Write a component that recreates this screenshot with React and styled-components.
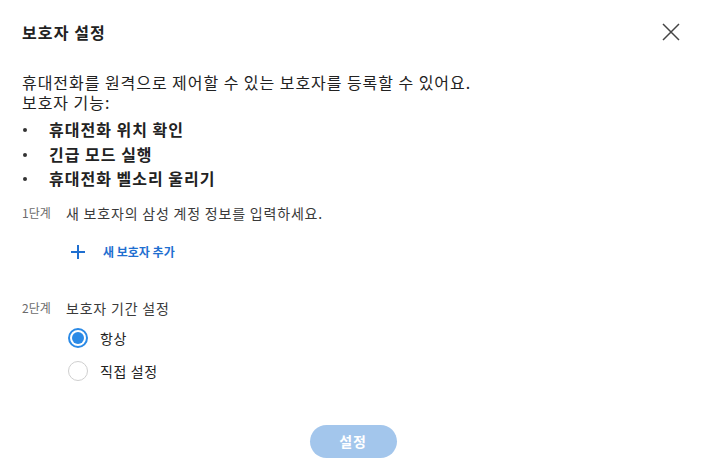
import React from "react";
import styled, { createGlobalStyle } from "styled-components";

const GlobalStyle = createGlobalStyle`
  html, body { margin: 0; padding: 0; background: #fff; }
  body { font-family: "Noto Sans CJK KR", "Noto Sans", sans-serif; color: #222; }
  * { box-sizing: border-box; }
`;

const Dialog = styled.div`
  width: 706px;
  height: 476px;
  padding: 20px 26px 0 22px;
  display: flex;
  flex-direction: column;
`;

const Header = styled.div`
  display: flex;
  align-items: center;
  justify-content: space-between;
  height: 24px;
`;

const Title = styled.h1`
  margin: 0;
  font-size: 16px;
  line-height: 24px;
  font-weight: 700;
  letter-spacing: 1.1px;
  color: #222;
`;

const CloseButton = styled.button`
  border: 0;
  background: none;
  padding: 0;
  width: 18px;
  height: 18px;
  display: flex;
  cursor: pointer;
`;

const Intro = styled.p`
  margin: 28px 0 0;
  font-size: 16px;
  line-height: 20px;
  letter-spacing: 0.95px;
  color: #222;
`;

const FeatureList = styled.ul`
  list-style: none;
  margin: 5px 0 0;
  padding: 0;
`;

const Feature = styled.li`
  position: relative;
  padding-left: 27px;
  font-size: 16px;
  font-weight: 700;
  line-height: 24.5px;
  letter-spacing: 1px;
  color: #222;
  &::before {
    content: "";
    position: absolute;
    left: 1px;
    top: 11px;
    width: 4px;
    height: 4px;
    border-radius: 50%;
    background: #333;
  }
`;

const Step = styled.div`
  display: flex;
  align-items: center;
  margin-top: ${(p) => p.$mt}px;
  height: 20px;
`;

const StepLabel = styled.span`
  width: 44px;
  font-size: 12px;
  color: #6b6b6b;
`;

const StepText = styled.span`
  font-size: 14px;
  letter-spacing: 0.8px;
  color: #3a3a3a;
`;

const AddButton = styled.button`
  display: flex;
  align-items: center;
  gap: 18px;
  margin: 19px 0 0 49px;
  height: 20px;
  border: 0;
  background: none;
  padding: 0;
  font-family: inherit;
  font-size: 12px;
  font-weight: 700;
  color: #1f6fd0;
  cursor: pointer;
`;

const RadioGroup = styled.div`
  display: flex;
  flex-direction: column;
  gap: 9px;
  margin: 8px 0 0 46px;
`;

const RadioRow = styled.label`
  display: flex;
  align-items: center;
  gap: 12px;
  height: 24px;
  font-size: 14px;
  letter-spacing: 0.6px;
  color: #222;
`;

const RadioCircle = styled.span`
  width: 20px;
  height: 20px;
  border-radius: 50%;
  border: ${(p) => (p.$checked ? "2px solid #2b8ae6" : "1px solid #cfcfcf")};
  display: flex;
  align-items: center;
  justify-content: center;
  &::after {
    content: "";
    display: ${(p) => (p.$checked ? "block" : "none")};
    width: 12px;
    height: 12px;
    border-radius: 50%;
    background: #2b8ae6;
  }
`;

const Footer = styled.div`
  display: flex;
  justify-content: center;
  margin-top: 42px;
  padding-left: 4px;
`;

const SubmitButton = styled.button`
  width: 87px;
  height: 33px;
  border: 0;
  border-radius: 17px;
  background: #a3c6ec;
  color: #fff;
  font-family: inherit;
  font-size: 14px;
  font-weight: 700;
  letter-spacing: 0.8px;
`;

export default function App() {
  return (
    <>
      <GlobalStyle />
      <Dialog>
        <Header>
          <Title>보호자 설정</Title>
          <CloseButton aria-label="닫기">
            <svg width="18" height="18" viewBox="0 0 18 18">
              <path d="M1 1L17 17M17 1L1 17" stroke="#444" strokeWidth="1.5" fill="none" />
            </svg>
          </CloseButton>
        </Header>
        <Intro>
          휴대전화를 원격으로 제어할 수 있는 보호자를 등록할 수 있어요.
          <br />
          보호자 기능:
        </Intro>
        <FeatureList>
          <Feature>휴대전화 위치 확인</Feature>
          <Feature>긴급 모드 실행</Feature>
          <Feature>휴대전화 벨소리 울리기</Feature>
        </FeatureList>
        <Step $mt={12}>
          <StepLabel>1단계</StepLabel>
          <StepText>새 보호자의 삼성 계정 정보를 입력하세요.</StepText>
        </Step>
        <AddButton>
          <svg width="14" height="14" viewBox="0 0 14 14">
            <path d="M7 0V14M0 7H14" stroke="#1f6fd0" strokeWidth="2" fill="none" />
          </svg>
          새 보호자 추가
        </AddButton>
        <Step $mt={36}>
          <StepLabel>2단계</StepLabel>
          <StepText>보호자 기간 설정</StepText>
        </Step>
        <RadioGroup>
          <RadioRow>
            <RadioCircle $checked />
            항상
          </RadioRow>
          <RadioRow>
            <RadioCircle />
            직접 설정
          </RadioRow>
        </RadioGroup>
        <Footer>
          <SubmitButton>설정</SubmitButton>
        </Footer>
      </Dialog>
    </>
  );
}
